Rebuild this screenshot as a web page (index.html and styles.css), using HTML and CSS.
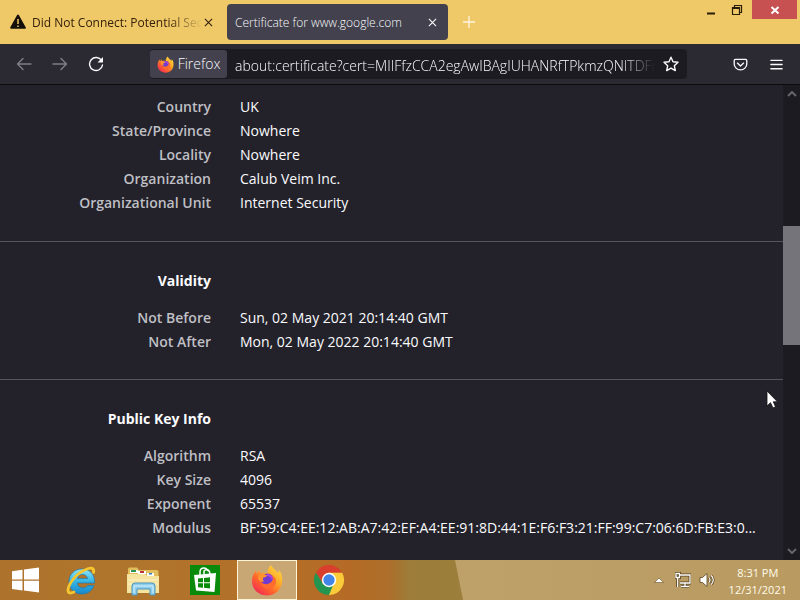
FILE: index.html
```html
<!DOCTYPE html>
<html lang="en">
<head>
<meta charset="utf-8">
<title>Certificate for www.google.com</title>
<link rel="stylesheet" href="styles.css">
</head>
<body>
<header class="tabbar">
  <div class="tab">
    <svg class="warn" viewBox="0 0 16 16"><path d="M8 1.600 14.800 13.800H1.200Z" fill="#15100a" stroke="#15100a" stroke-width="2" stroke-linejoin="round"/><path d="M8 5v5M8 11.400v1.600" stroke="#efc867" stroke-width="1.500"/></svg>
    <span class="tab-title fade">Did Not Connect: Potential Secu</span>
    <button class="tab-close" aria-label="Close tab"><svg viewBox="0 0 10 10"><path d="m1 1 8 8M9 1 1 9"/></svg></button>
  </div>
  <div class="tab active">
    <span class="tab-title">Certificate for www.google.com</span>
    <button class="tab-close" aria-label="Close tab"><svg viewBox="0 0 10 10"><path d="m1 1 8 8M9 1 1 9"/></svg></button>
  </div>
  <button class="new-tab" aria-label="New tab"><svg viewBox="0 0 12 12"><path d="M6 0v12M0 6h12"/></svg></button>
  <div class="window-buttons">
    <button aria-label="Minimize"><svg viewBox="0 0 12 12"><path d="M2 9.500h8" stroke="#2a1d08" stroke-width="2"/></svg></button>
    <button aria-label="Restore"><svg viewBox="0 0 12 12"><path d="M1.500 3.500h7v7h-7zM1.500 4.500h7M3.500 3V1.500h7v7H9" fill="none" stroke="#2a1d08" stroke-width="1.200"/></svg></button>
    <button class="close-window" aria-label="Close"><svg viewBox="0 0 12 12"><path d="m2.500 3 7 6.500M9.500 3l-7 6.500" stroke="#fff" stroke-width="2"/></svg></button>
  </div>
</header>
<nav class="toolbar">
  <div class="nav-buttons">
    <button class="dim" aria-label="Back"><svg viewBox="0 0 16 16"><path d="M15 8H1.500M7 2.500 1.500 8 7 13.500"/></svg></button>
    <button class="dim" aria-label="Forward"><svg viewBox="0 0 16 16"><path d="M1 8h13.500M9 2.500 14.500 8 9 13.500"/></svg></button>
    <button class="reload" aria-label="Reload"><svg viewBox="0 0 16 16"><path d="M13.600 4.600A6.500 6.500 0 1 0 14.500 9"/><path d="M15 1v5.500H9.500Z"/></svg></button>
  </div>
  <div class="urlbar">
    <button class="identity">
      <svg viewBox="0 0 32 32"><use href="#firefox"/></svg>Firefox
    </button>
    <input class="url" type="text" aria-label="Address" value="about:certificate?cert=MIIFfzCCA2egAwIBAgIUHANRfTPkmzQNITDFr">
    <button class="star" aria-label="Bookmark"><svg viewBox="0 0 16 16"><path d="m8 1.200 2 4.600 5 .5-3.700 3.400 1 4.900L8 12.100l-4.300 2.500 1-4.900L1 6.300l5-.5Z"/></svg></button>
  </div>
  <div class="tools">
    <button aria-label="Save to Pocket"><svg viewBox="0 0 16 16"><path d="M2.500 2.500h11q1.200 0 1.200 1.200V7.500a6.700 6.200 0 0 1-13.400 0V3.700q0-1.200 1.200-1.200ZM4.700 6.500 8 9.600l3.300-3.100"/></svg></button>
    <button aria-label="Menu"><svg viewBox="0 0 16 16"><path d="M2 3.500h12M2 8h12M2 12.500h12"/></svg></button>
  </div>
</nav>
<div class="viewport">
  <main class="page">
    <section class="group">
      <dl>
        <dt>Country</dt><dd>UK</dd>
        <dt>State/Province</dt><dd>Nowhere</dd>
        <dt>Locality</dt><dd>Nowhere</dd>
        <dt>Organization</dt><dd>Calub Veim Inc.</dd>
        <dt>Organizational Unit</dt><dd>Internet Security</dd>
      </dl>
    </section>
    <section class="group">
      <h2>Validity</h2>
      <dl>
        <dt>Not Before</dt><dd>Sun, 02 May 2021 20:14:40 GMT</dd>
        <dt>Not After</dt><dd>Mon, 02 May 2022 20:14:40 GMT</dd>
      </dl>
    </section>
    <section class="group">
      <h2>Public Key Info</h2>
      <dl>
        <dt>Algorithm</dt><dd>RSA</dd>
        <dt>Key Size</dt><dd>4096</dd>
        <dt>Exponent</dt><dd>65537</dd>
        <dt>Modulus</dt><dd>BF:59:C4:EE:12:AB:A7:42:EF:A4:EE:91:8D:44:1E:F6:F3:21:FF:99:C7:06:6D:FB:E3:0...</dd>
      </dl>
    </section>
  </main>
  <div class="scrollbar">
    <svg viewBox="0 0 10 6"><path d="m1 5 4-4 4 4"/></svg>
    <div class="track"><div class="thumb"></div></div>
    <svg viewBox="0 0 10 6"><path d="m1 1 4 4 4-4"/></svg>
  </div>
</div>
<footer class="taskbar">
  <svg class="wallpaper" viewBox="0 0 800 40" preserveAspectRatio="none" aria-hidden="true">
    <defs>
      <linearGradient id="wl"><stop offset="0" stop-color="#ad732c"/><stop offset=".3" stop-color="#b0752d"/><stop offset=".75" stop-color="#b56b25"/><stop offset=".84" stop-color="#ad6f2b"/><stop offset=".88" stop-color="#9c7c38"/><stop offset="1" stop-color="#9c7f3c"/></linearGradient>
      <linearGradient id="wr"><stop offset="0" stop-color="#bda168"/><stop offset="1" stop-color="#b99b62"/></linearGradient>
    </defs>
    <path d="M0 0h456l8 40H0Z" fill="url(#wl)"/><path d="M455 0h345v40H463Z" fill="url(#wr)"/>
  </svg>
  <button class="app" aria-label="Start"><svg viewBox="0 0 32 32"><path d="M3 7.200 13.500 5.800V15.400H3ZM15 5.600 30 3.500v11.900H15ZM3 16.700h10.500v9.800L3 25ZM15 16.700h15v11.800l-15-1.900Z" fill="#fff"/></svg></button>
  <button class="app" aria-label="Internet Explorer"><svg viewBox="0 0 32 32">
    <defs><linearGradient id="ie" x2="0" y2="1"><stop stop-color="#8ee5f7"/><stop offset=".5" stop-color="#35b5e5"/><stop offset="1" stop-color="#1688cb"/></linearGradient></defs>
    <path d="M29.500 19H12.200c.5 5.500 8.300 6.300 10.400 2.600h6.200c-1.800 5.300-6 8.400-11.800 8.400C9.500 30 4 24.500 4 17.500S9.500 5 17 5c8 0 13 5.500 12.500 14ZM12.300 14.600h10.200c-.6-5.400-9.200-5.700-10.200 0Z" fill="url(#ie)" stroke="#1a79b4" stroke-width=".7"/>
    <path d="M28.500 8.500c1-4-2-6-7.500-3C11 9 3.500 20 3 26c-.2 3.300 2.500 3.700 6 2" fill="none" stroke="#f6c62e" stroke-width="2.800" stroke-linecap="round"/></svg></button>
  <button class="app" aria-label="File Explorer"><svg viewBox="0 0 32 32">
    <path d="M1 5q0-1.500 1.500-1.500H10L12 6h18q1.500 0 1.500 1.500V28H1Z" fill="#e2bd5c"/><path d="M3 6h8v3H3z" fill="#fff"/><path d="M4 6h5v2H4z" fill="#2c9452"/><path d="M11 7h8v3h-8z" fill="#fff"/><path d="M13 7h4v2h-4z" fill="#b93535"/><path d="M20 9h7v3h-7z" fill="#fff"/><path d="M22 9h3v1.500h-3z" fill="#357cba"/>
    <path d="M0 10h18l2 2h12v17H0Z" fill="#f5e4a0"/><path d="M1 16h30M1 20h30" stroke="#fff1c2"/>
    <path d="M5 31V22q0-3 3-3h17q3 0 3 3v9h-5v-6H10v6Z" fill="#8fcdeb" stroke="#4997c1"/><path d="M7 29v-7h19v7" fill="none" stroke="#d5f2ff"/></svg></button>
  <button class="app" aria-label="Store"><svg viewBox="0 0 32 32"><path d="M1 1h30v30H1Z" fill="#098a0b"/><path d="m5 11 22-2-1.500 19L7 26.500Z" fill="#fff"/><path d="M11 12V8q0-4 4-4 3 0 4 3M15 10V7q1-2 4-1 2 1 2 5" fill="none" stroke="#fff" stroke-width="1.500"/><path d="m9 14.500 5-.5v4.200H9ZM15 13.900l6-.6v4.900h-6ZM9 19.200h5v4.500l-5-.5ZM15 19.200h6v5.200l-6-.6Z" fill="#098a0b"/></svg></button>
  <button class="app running" aria-label="Firefox"><svg viewBox="0 0 32 32">
    <defs><linearGradient id="fx" x1="1" x2=".2" y2="1"><stop stop-color="#ffe14b"/><stop offset=".4" stop-color="#ffad28"/><stop offset=".7" stop-color="#ff612d"/><stop offset="1" stop-color="#ef2759"/></linearGradient></defs>
    <g id="firefox"><path d="M20 1c1 3 5 5 7 8 1-1 .7-2.300.5-3.300C31 9 31.500 13 31 18c-.8 8-7 13.500-15 13.500S1 25.500 1 17.500c0-5 1.500-8 4-11l.8 3.200L8.300 6l1 3.500c3-1.200 5-.8 7 0C16.500 6 17.500 3 20 1Z" fill="url(#fx)"/><circle cx="16.500" cy="16" r="6.500" fill="#713bd0"/><path d="M8 11.500c3-2 6-1 8 0-1 2-3 2-4 2.300-.2 2 .2 3 1 4C8 18 6 14.500 8 11.500Z" fill="#ff9530"/><path d="M10 18c3 3 8 3 11-1 1.500-2 .6-4-1-6 5 2 7 7 3 11.500-5 5-12 2-13-4.500Z" fill="#ff6c2d"/><path d="M16 11q4 0 5 4" fill="none" stroke="#ad46df" stroke-width="2"/></g></svg></button>
  <button class="app" aria-label="Chrome"><svg viewBox="0 0 32 32"><path d="M29 8.500A15 15 0 0 1 16 31V8.500Z" fill="#fccb39"/><path d="M3 8.500 10 20l11-1-5 12A15 15 0 0 1 3 8.500Z" fill="#249451"/><path d="M3 8.500A15 15 0 0 1 29 8.500H16l-6 10Z" fill="#da3e2c"/><circle cx="16" cy="16" r="7.200" fill="#fff"/><circle cx="16" cy="16" r="5.700" fill="#4285e8"/></svg></button>
  <div class="tray">
    <button aria-label="Show hidden icons"><svg viewBox="0 0 16 16"><path d="m3.500 10.500 4.500-4.500 4.500 4.500Z" fill="#fff" stroke="#6c5129" stroke-width=".6"/></svg></button>
    <button aria-label="Network"><svg viewBox="0 0 16 16"><g fill="none" stroke="#57411d" stroke-width="3"><path d="M5 3h10v8H5M10 11v3M6 14.500h8M1 1.500h3.500v4H1zM2.700 6v9"/></g><g fill="none" stroke="#fff" stroke-width="1.300"><path d="M5 3h10v8H5M10 11v3M6 14.500h8M1 1.500h3.500v4H1zM2.700 6v9"/></g></svg></button>
    <button aria-label="Volume"><svg viewBox="0 0 16 16"><path d="M1 5.500h2.500L8 1.500v13l-4.500-4H1Z" fill="#fff" stroke="#57411d" stroke-width=".8"/><g fill="none" stroke="#57411d" stroke-width="2.600"><path d="M10 5.500q2 2.500 0 5M12.300 3.500q4 4.500 0 9"/></g><g fill="none" stroke="#fff" stroke-width="1.200"><path d="M10 5.500q2 2.500 0 5M12.300 3.500q4 4.500 0 9"/></g></svg></button>
    <div class="clock"><span>8:31 PM</span><span>12/31/2021</span></div>
  </div>
</footer>
<svg class="cursor" viewBox="0 0 12 19" aria-hidden="true"><path d="M1 1v15l3.500-3.300L7 18l2.500-1.200L7.300 11.800H11.500Z" fill="#fff" stroke="#111" stroke-width=".8"/></svg>
</body>
</html>
```
FILE: styles.css
```css
* { box-sizing: border-box; }

body {
  margin: 0;
  height: 100vh;
  display: flex;
  flex-direction: column;
  overflow: hidden;
  background: #23222a;
  color: #fbfbfe;
  font: 14px/24px "Open Sans", "Noto Sans", sans-serif;
}

button {
  display: flex;
  align-items: center;
  justify-content: center;
  margin: 0;
  padding: 0;
  border: 0;
  background: none;
  color: inherit;
  font: inherit;
}

svg { display: block; flex: none; }

/* Tabs */
.tabbar {
  display: flex;
  flex: none;
  height: 44px;
  padding: 4px 3px;
  background: #efc867;
}
.tab {
  display: flex;
  align-items: center;
  width: 221px;
  height: 36px;
  margin-right: 3px;
  padding: 0 10px 0 8px;
  border-radius: 4px;
  color: #35200b;
  font-size: 12px;
}
.tab.active { background: #42414d; color: #fbfbfe; font-weight: 300; }
.warn { width: 16px; height: 16px; margin: 0 6px 0 -1px; }
.tab-title { flex: 1; min-width: 0; padding-top: 2px; white-space: nowrap; }
.fade { mask-image: linear-gradient(to right, #000 80%, transparent 100%); }
.tab-close { width: 12px; height: 20px; }
.tab-close svg { width: 9px; height: 9px; }
.tab-close path { fill: none; stroke: currentColor; stroke-width: 1.2; }
.new-tab { width: 36px; height: 36px; }
.new-tab svg { width: 12px; height: 12px; }
.new-tab path { stroke: #fff5df; stroke-width: 1.3; }
.window-buttons {
  display: flex;
  margin: -4px 0 0 auto;
  height: 19px;
}
.window-buttons button { width: 26px; }
.window-buttons svg { width: 12px; height: 12px; }
.window-buttons .close-window { width: 45px; margin-left: 2px; background: #c75050; }

/* Navigation */
.toolbar {
  display: flex;
  flex: none;
  align-items: center;
  height: 41px;
  padding: 0 12px 0 6px;
  background: #2b2a33;
  border-bottom: 1px solid #0c0c0d;
}
.toolbar svg { width: 16px; height: 16px; }
.toolbar .nav-buttons path,
.star path,
.tools path { fill: none; stroke: #fbfbfe; stroke-width: 1.4; stroke-linecap: round; stroke-linejoin: round; }
.toolbar .reload path + path { fill: #fbfbfe; stroke: none; }
.nav-buttons { display: flex; width: 144px; }
.nav-buttons button { width: 36px; height: 32px; }
.dim { opacity: 0.4; }
.urlbar {
  display: flex;
  flex: 1;
  align-items: center;
  min-width: 0;
  height: 30px;
  border-radius: 4px;
  background: #1c1b22;
}
.identity {
  width: 77px;
  height: 28px;
  margin-right: 8px;
  gap: 4px;
  border-radius: 3px;
  background: #42414d;
  font-weight: 300;
}
.toolbar .identity svg { width: 17px; height: 17px; }
.url {
  flex: 1;
  min-width: 0;
  height: 28px;
  padding: 2px 0 0;
  border: 0;
  outline: 0;
  background: none;
  color: inherit;
  font: inherit;
  font-weight: 300;
  mask-image: linear-gradient(to right, #000 92%, transparent 100%);
}
.star { width: 32px; height: 28px; }
.tools { display: flex; margin-left: 41px; gap: 12px; }
.tools button { width: 24px; height: 28px; }
.tools svg { width: 15px; height: 15px; }

/* Certificate page */
.viewport { display: flex; flex: 1; min-height: 0; }
.page { flex: 1; min-width: 0; overflow: hidden; }
.group { padding: 27px 12px 25px 0; border-top: 1px solid #56555c; }
.group:first-child { padding-top: 10px; padding-bottom: 26px; border-top: 0; }
.group h2 {
  width: 211px;
  margin: 0 0 13px;
  font-size: 14px;
  line-height: 24px;
  font-weight: 700;
  text-align: right;
}
.group dl {
  display: grid;
  grid-template-columns: 211px minmax(0, 1fr);
  column-gap: 29px;
  margin: 0;
}
.group dt { color: #bfbfc4; font-weight: 600; text-align: right; }
.group dd { margin: 0; overflow: hidden; white-space: nowrap; text-overflow: ellipsis; }

.scrollbar {
  display: flex;
  flex-direction: column;
  align-items: center;
  width: 17px;
  padding: 6px 0;
  background: #1c1b22;
}
.scrollbar svg { width: 10px; height: 6px; }
.scrollbar path { fill: none; stroke: #66656c; stroke-width: 2; }
.track { flex: 1; width: 100%; padding-top: 129px; }
.thumb { height: 28%; min-height: 119px; background: #75747b; }

/* Taskbar */
.taskbar {
  position: relative;
  display: flex;
  flex: none;
  height: 40px;
}
.wallpaper { position: absolute; inset: 0; z-index: -1; width: 100%; height: 100%; }
.app { width: 60px; height: 40px; margin-right: 2px; }
.app:first-of-type { width: 49px; }
.app svg { width: 32px; height: 32px; }
.app.running {
  border: 1px solid #fff4d6;
  background: #c9a775;
}
.tray { display: flex; align-items: center; gap: 8px; margin-left: auto; padding-right: 13px; }
.tray svg { width: 16px; height: 16px; }
.clock {
  display: flex;
  flex-direction: column;
  align-items: center;
  margin-left: 6px;
  color: #fffbe8;
  font-size: 11px;
  line-height: 17px;
  padding-top: 2px;
}

.cursor { position: absolute; left: 766px; top: 390px; width: 12px; height: 19px; }
```
